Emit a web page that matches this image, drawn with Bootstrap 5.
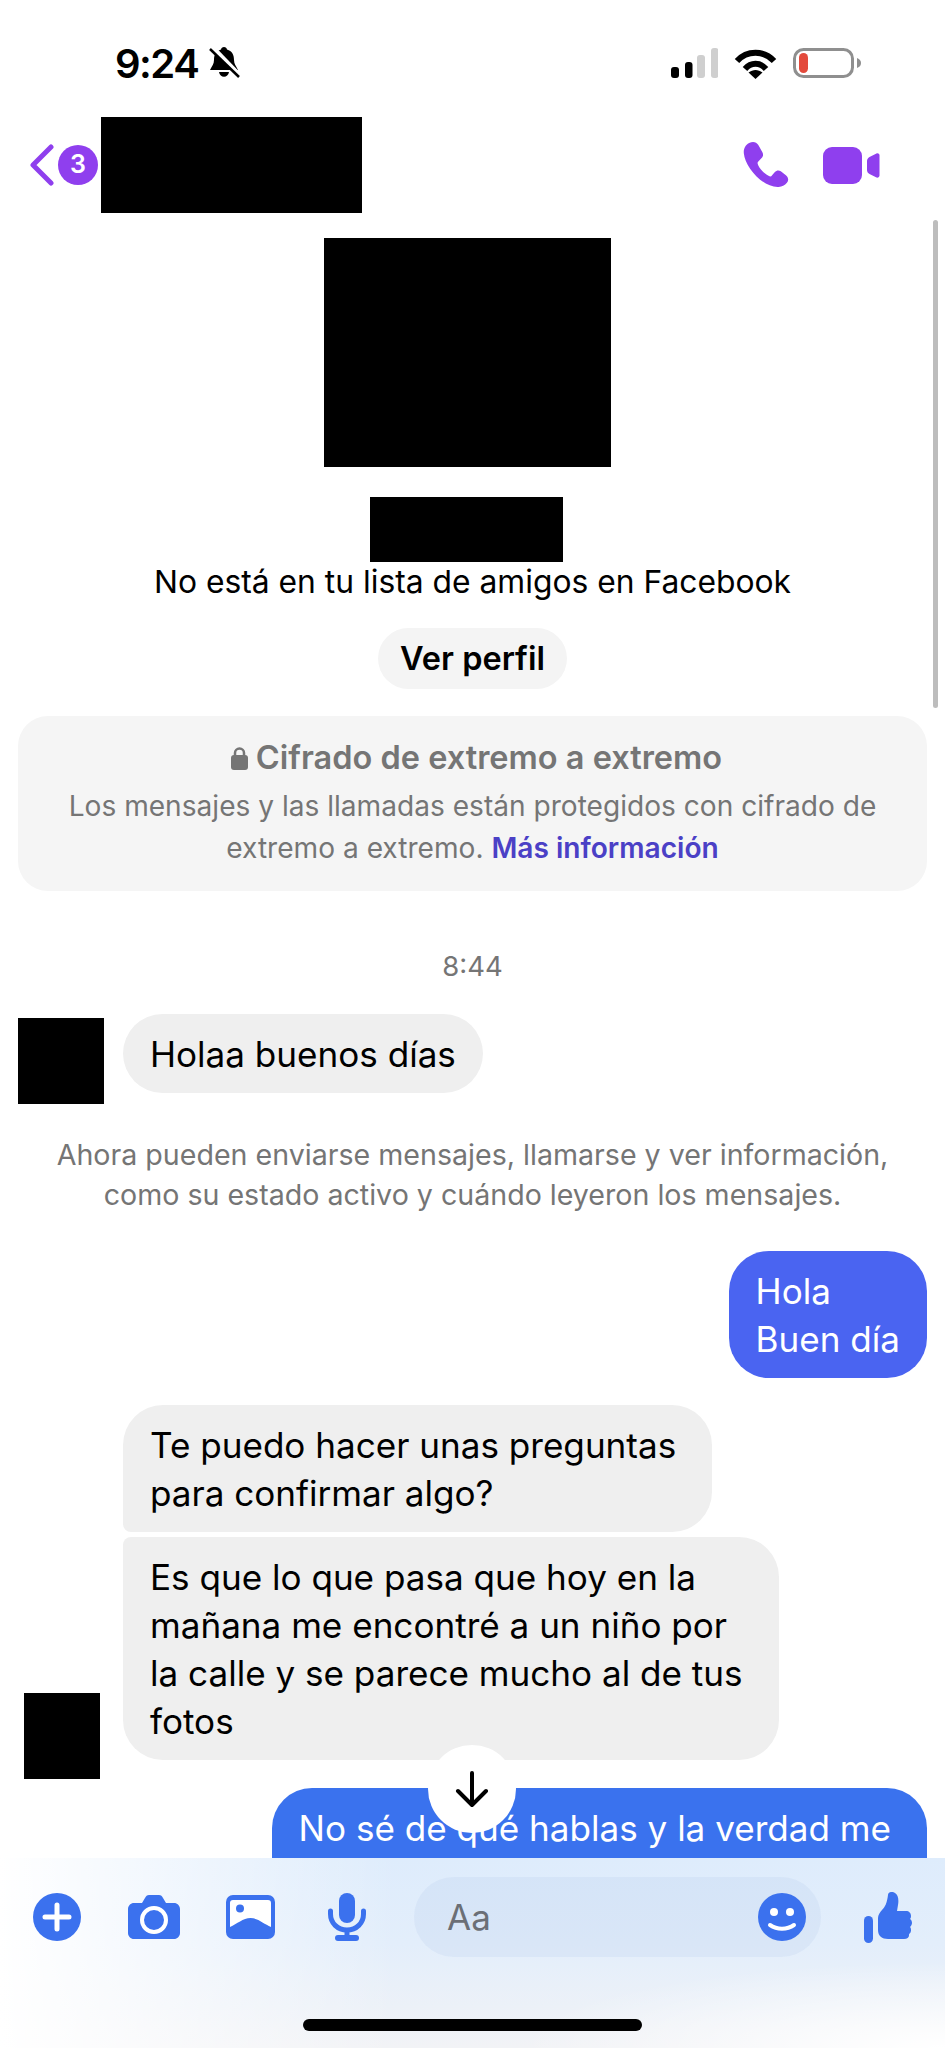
<!DOCTYPE html>
<html lang="es">
<head>
  <meta charset="UTF-8">
  <meta name="viewport" content="width=device-width, initial-scale=1.0">
  <title>Messenger - Chat</title>
  <link href="https://cdn.jsdelivr.net/npm/bootstrap@5.3.0/dist/css/bootstrap.min.css" rel="stylesheet">
  <style>
    body {
      font-family: 'Inter', 'Liberation Sans', sans-serif;
      background: #fff;
      margin: 0;
    }
    svg { display: block; flex-shrink: 0; }
    .pantalla {
      width: 945px;
      height: 2048px;
      overflow: hidden;
      color: #000;
    }
    .tapado { background: #000; flex-shrink: 0; }

    /* barra de estado */
    .barra-estado { height: 117px; padding: 46px 0 0 115px; }
    .hora { font-size: 40px; font-weight: 600; line-height: 36px; letter-spacing: -1.500px; width: 89px; }
    .estado-der { margin-left: auto; padding-right: 83px; padding-top: 2px; }

    /* cabecera */
    .cabecera { height: 96px; padding-left: 30px; }
    .insignia {
      width: 40px; height: 40px; border-radius: 50%;
      background: #8f3fee; color: #fff;
      font-size: 25px; font-weight: 600;
      margin: 0 3px 0 4px;
    }
    .tapado-nombre { width: 261px; height: 96px; }
    .acciones { margin-left: auto; padding-right: 65px; gap: 32px; }

    /* perfil */
    .perfil { padding-top: 25px; }
    .tapado-avatar { width: 287px; height: 229px; margin-right: 10px; }
    .tapado-usuario { width: 193px; height: 65px; margin: 30px 12px 0 0; }
    .perfil-texto { font-size: 31.800px; line-height: 40px; }
    .btn-perfil {
      background: #f4f4f4; border: 0; border-radius: 31px; color: #000;
      font-size: 32.500px; font-weight: 600; line-height: 40px;
      height: 61px; width: 189px; padding: 0; margin-top: 26px;
    }

    /* cifrado */
    .aviso-cifrado {
      background: #f5f5f5; border-radius: 30px;
      margin: 27px 18px 0; height: 175px; padding-top: 22px;
      color: #757575; text-align: center;
    }
    .aviso-titulo { font-size: 32.500px; font-weight: 600; line-height: 40px; gap: 8px; padding-left: 8px; }
    .aviso-cuerpo { font-size: 28.100px; line-height: 42px; margin-top: 7px; }
    .aviso-cuerpo a { color: #4b40c6; font-weight: 600; text-decoration: none; }

    /* chat */
    .hora-chat { font-size: 27.500px; line-height: 34px; color: #757575; margin-top: 58px; }
    .fila-msj { padding: 0 18px; }
    .burbuja {
      font-size: 35.100px; line-height: 48px;
      padding: 15.500px 27px; border-radius: 40px;
      background: #efefef;
    }
    .msj-primero { margin-top: 31px; }
    .avatar-uno { width: 86px; height: 86px; margin: 4px 19px 0 0; }
    .avatar-dos { width: 76px; height: 86px; margin: 0 23px -19px 6px; align-self: flex-end; }
    .msj-inicio { border-bottom-left-radius: 8px; padding-right: 36px; }
    .msj-fin { border-top-left-radius: 8px; margin-top: 5px; padding-right: 36px; }
    .info-chat { font-size: 28.600px; line-height: 40px; color: #757575; text-align: center; margin-top: 31px; }
    .msj-hola { margin-top: 36px; }
    .msj-grupo { margin-top: 27px; }
    .msj-ultimo { margin-top: 28px; }
    .burbuja-azul { background: #4a64f1; color: #fff; }
    .burbuja-azul2 { background: #3a72ee; color: #fff; padding-right: 36px; }

    /* encima del contenido */
    .barra-scroll { position: absolute; left: 933px; top: 220px; width: 5px; height: 488px; border-radius: 3px; background: #bdbdbd; }
    .btn-bajar {
      position: absolute; left: 428px; top: 1745px; width: 88px; height: 88px;
      border-radius: 50%; background: #fff;
    }
    .redactor {
      position: absolute; left: 0; right: 0; top: 1858px; bottom: 0;
      background:
        radial-gradient(ellipse at 100% 100%, #fff 0, rgba(255,255,255,0) 32%),
        linear-gradient(to right, #fff 0, rgba(255,255,255,0) 42%),
        linear-gradient(to bottom, #deecfc 0, #e3eefb 45%, #f2f3f6 100%);
    }
    .redactor-fila { height: 118px; padding-left: 33px; }
    .caja-texto {
      width: 407px; height: 80px; border-radius: 40px;
      background: rgba(170, 195, 235, .18);
      margin: 0 43px 0 48px; padding: 0 15px 0 33px;
      color: #6b6f76; font-size: 35px;
    }
    .mg-cam { margin-left: 47px; }
    .mg-img { margin-left: 46px; }
    .mg-mic { margin-left: 53px; }
    .linea-inicio {
      position: absolute; left: 303px; top: 2019px; width: 339px; height: 12px;
      border-radius: 6px; background: #000;
    }
  </style>
</head>
<body>

<div class="pantalla position-relative">

  <!-- Barra de estado -->
  <div class="barra-estado d-flex align-items-start">
    <div class="hora">9:24</div>
    <svg width="33" height="34" viewBox="0 0 33 34" class="ms-1">
      <path d="M16 1c1.600 0 2.800 1.200 3 2.600C24 5 26 9 26 14c0 4 2 6 4 10H2c2-4 4-6 4-10C6 9 8 5 13 3.600 13.200 2.200 14.400 1 16 1z" fill="#000"/>
      <path d="M11 26h10c-.5 2.800-2.600 4.800-5 4.800S11.500 28.800 11 26z" fill="#000"/>
      <path d="M3 0l29 30" stroke="#fff" stroke-width="5"/>
      <path d="M2 3l29 28" stroke="#000" stroke-width="2.500"/>
    </svg>
    <div class="estado-der d-flex align-items-start">
      <svg width="47" height="30" viewBox="0 0 47 30">
        <rect x="0" y="19" width="8" height="11" rx="3" fill="#000"/>
        <rect x="14" y="14" width="7.500" height="16" rx="3" fill="#000"/>
        <rect x="26" y="7" width="8" height="23" rx="3" fill="#cfcfcf"/>
        <rect x="40" y="0" width="7.500" height="30" rx="3" fill="#cfcfcf"/>
      </svg>
      <svg width="43" height="31" viewBox="0 0 43 31" class="ms-3" fill="none">
        <path d="M3 13C13 2 30 2 40 13" stroke="#000" stroke-width="6"/>
        <path d="M11 21C17 14 26 14 32 21" stroke="#000" stroke-width="6"/>
        <path d="M21.500 31L14.500 24.500C19 21 24 21 28.500 24.500z" fill="#000"/>
      </svg>
      <svg width="69" height="30" viewBox="0 0 69 30" class="ms-3" fill="none">
        <rect x="1.500" y="1.500" width="58" height="27" rx="9" stroke="#8f8f8f" stroke-width="3"/>
        <rect x="6" y="5" width="9" height="20" rx="4.500" fill="#e34a3c"/>
        <path d="M64 10c3 1 4 3 4 5s-1 4-4 5z" fill="#8f8f8f"/>
      </svg>
    </div>
  </div>

  <!-- Cabecera -->
  <nav class="cabecera d-flex align-items-center">
    <svg width="24" height="42" viewBox="0 0 24 42" fill="none">
      <path d="M21 3L3 21l18 18" stroke="#8f3fee" stroke-width="5" stroke-linecap="round" stroke-linejoin="round"/>
    </svg>
    <div class="insignia d-flex align-items-center justify-content-center">3</div>
    <div class="tapado tapado-nombre"></div>
    <div class="acciones d-flex align-items-center">
      <svg width="48" height="48" viewBox="0 0 47 47">
        <path d="M6 2c4-2 7-1 9 2l4 7c1 2 1 4-1 6l-3 3c-1 1-1 2 0 4 2 4 6 8 10 10 1.500 1 2.500 1 3.500-.5l2.500-3c2-2 4-2 6-1l5 4c2.500 2 3 5 1 7.500-2 2.500-5 4-8 4C20 46 2 26 .8 12 .5 8 2 4 6 2z" fill="#8f3fee"/>
      </svg>
      <svg width="57" height="37" viewBox="0 0 57 37">
        <rect x="0" y="0" width="39" height="37" rx="9" fill="#8f3fee"/>
        <path d="M44 14c0-2 1-3 2.500-4l7-3.500c1.500-.5 3 .5 3 2v20c0 1.500-1.500 2.500-3 2l-7-3.500C45 26 44 25 44 23z" fill="#8f3fee"/>
      </svg>
    </div>
  </nav>

  <!-- Perfil -->
  <section class="perfil d-flex flex-column align-items-center">
    <div class="tapado tapado-avatar"></div>
    <div class="tapado tapado-usuario"></div>
    <div class="perfil-texto">No está en tu lista de amigos en Facebook</div>
    <button type="button" class="btn btn-perfil">Ver perfil</button>
  </section>

  <!-- Aviso de cifrado -->
  <section class="aviso-cifrado">
    <div class="aviso-titulo d-flex align-items-center justify-content-center">
      <svg width="17" height="23" viewBox="0 0 17 23">
        <path d="M4 9V6a4.500 4.500 0 0 1 9 0v3" fill="none" stroke="#757575" stroke-width="2.500"/>
        <rect x="0" y="8" width="17" height="15" rx="3" fill="#757575"/>
      </svg>
      <span>Cifrado de extremo a extremo</span>
    </div>
    <div class="aviso-cuerpo">Los mensajes y las llamadas están protegidos con cifrado de<br>extremo a extremo. <a href="#">Más información</a></div>
  </section>

  <div class="hora-chat text-center">8:44</div>

  <!-- Mensajes -->
  <div class="fila-msj msj-primero d-flex align-items-start">
    <div class="tapado avatar-uno"></div>
    <div class="burbuja">Holaa buenos días</div>
  </div>

  <div class="info-chat">Ahora pueden enviarse mensajes, llamarse y ver información,<br>como su estado activo y cuándo leyeron los mensajes.</div>

  <div class="fila-msj d-flex justify-content-end msj-hola">
    <div class="burbuja burbuja-azul">Hola<br>Buen día</div>
  </div>

  <div class="fila-msj d-flex msj-grupo">
    <div class="tapado avatar-dos"></div>
    <div class="d-flex flex-column align-items-start">
      <div class="burbuja msj-inicio">Te puedo hacer unas preguntas<br>para confirmar algo?</div>
      <div class="burbuja msj-fin">Es que lo que pasa que hoy en la<br>mañana me encontré a un niño por<br>la calle y se parece mucho al de tus<br>fotos</div>
    </div>
  </div>

  <div class="fila-msj d-flex justify-content-end msj-ultimo">
    <div class="burbuja burbuja-azul2">No sé de qué hablas y la verdad me<br>da igual</div>
  </div>

  <!-- Elementos superpuestos -->
  <div class="barra-scroll"></div>

  <div class="btn-bajar d-flex align-items-center justify-content-center">
    <svg width="34" height="38" viewBox="0 0 34 38" fill="none">
      <path d="M17 3v31M3 21l14 14 14-14" stroke="#000" stroke-width="4" stroke-linecap="round" stroke-linejoin="round"/>
    </svg>
  </div>

  <div class="redactor">
    <div class="redactor-fila d-flex align-items-center">
      <svg width="48" height="48" viewBox="0 0 48 48">
        <circle cx="24" cy="24" r="24" fill="#3b71ee"/>
        <path d="M24 12v24M12 24h24" stroke="#fff" stroke-width="5" stroke-linecap="round"/>
      </svg>
      <svg width="52" height="44" viewBox="0 0 52 44" class="mg-cam">
        <path d="M6 8h8l3-5c1-2 2-3 4-3h10c2 0 3 1 4 3l3 5h8c3.300 0 6 2.700 6 6v24c0 3.300-2.700 6-6 6H6c-3.300 0-6-2.700-6-6V14c0-3.300 2.700-6 6-6z" fill="#3b71ee"/>
        <circle cx="26" cy="25" r="12" fill="none" stroke="#fff" stroke-width="4"/>
      </svg>
      <svg width="49" height="44" viewBox="0 0 49 44" class="mg-img">
        <rect width="49" height="44" rx="7" fill="#3b71ee"/>
        <path d="M7 5h35a3 3 0 0 1 3 3v24c-7-3-13-9-20.500-9S11 29 4 32V8a3 3 0 0 1 3-3z" fill="#fff"/>
        <circle cx="14" cy="13.500" r="4" fill="#3b71ee"/>
      </svg>
      <svg width="38" height="48" viewBox="0 0 38 48" class="mg-mic" fill="none">
        <rect x="11" y="0" width="16" height="30" rx="8" fill="#3b71ee"/>
        <path d="M2.500 18v3c0 9 7 16 16.500 16s16.500-7 16.500-16v-3" stroke="#3b71ee" stroke-width="5" stroke-linecap="round"/>
        <path d="M19 37v8" stroke="#3b71ee" stroke-width="5"/>
        <rect x="7" y="42" width="24" height="6" rx="3" fill="#3b71ee"/>
      </svg>
      <div class="caja-texto d-flex align-items-center justify-content-between">
        <span>Aa</span>
        <svg width="48" height="48" viewBox="0 0 48 48" fill="none">
          <circle cx="24" cy="24" r="24" fill="#3b71ee"/>
          <circle cx="16" cy="19" r="4" fill="#fff"/>
          <circle cx="32" cy="19" r="4" fill="#fff"/>
          <path d="M12 32c7 5 17 5 24 0" stroke="#fff" stroke-width="4" stroke-linecap="round"/>
        </svg>
      </div>
      <svg width="48" height="51" viewBox="0 0 48 51">
        <rect x="0" y="24" width="9" height="27" rx="4.500" fill="#3b71ee"/>
        <path d="M24 3c0-3 4-4 7-2 3 2 4 6 3 12l-1 6h9c3 0 5 2 5 5 0 1.500-.5 2.500-1 3 1.500 1 2 2.500 2 4s-1 3-2 4c1 1 1 2.500 1 3.500 0 1.500-1 3-2 3.500.5 3-1.500 5-5 5H24c-6 0-10-3-10-9V26c0-3 2-6 4-8 3-3 5-7 6-15z" fill="#3b71ee"/>
      </svg>
    </div>
  </div>

  <div class="linea-inicio"></div>
</div>

<script src="https://cdn.jsdelivr.net/npm/bootstrap@5.3.0/dist/js/bootstrap.bundle.min.js"></script>
</body>
</html>
